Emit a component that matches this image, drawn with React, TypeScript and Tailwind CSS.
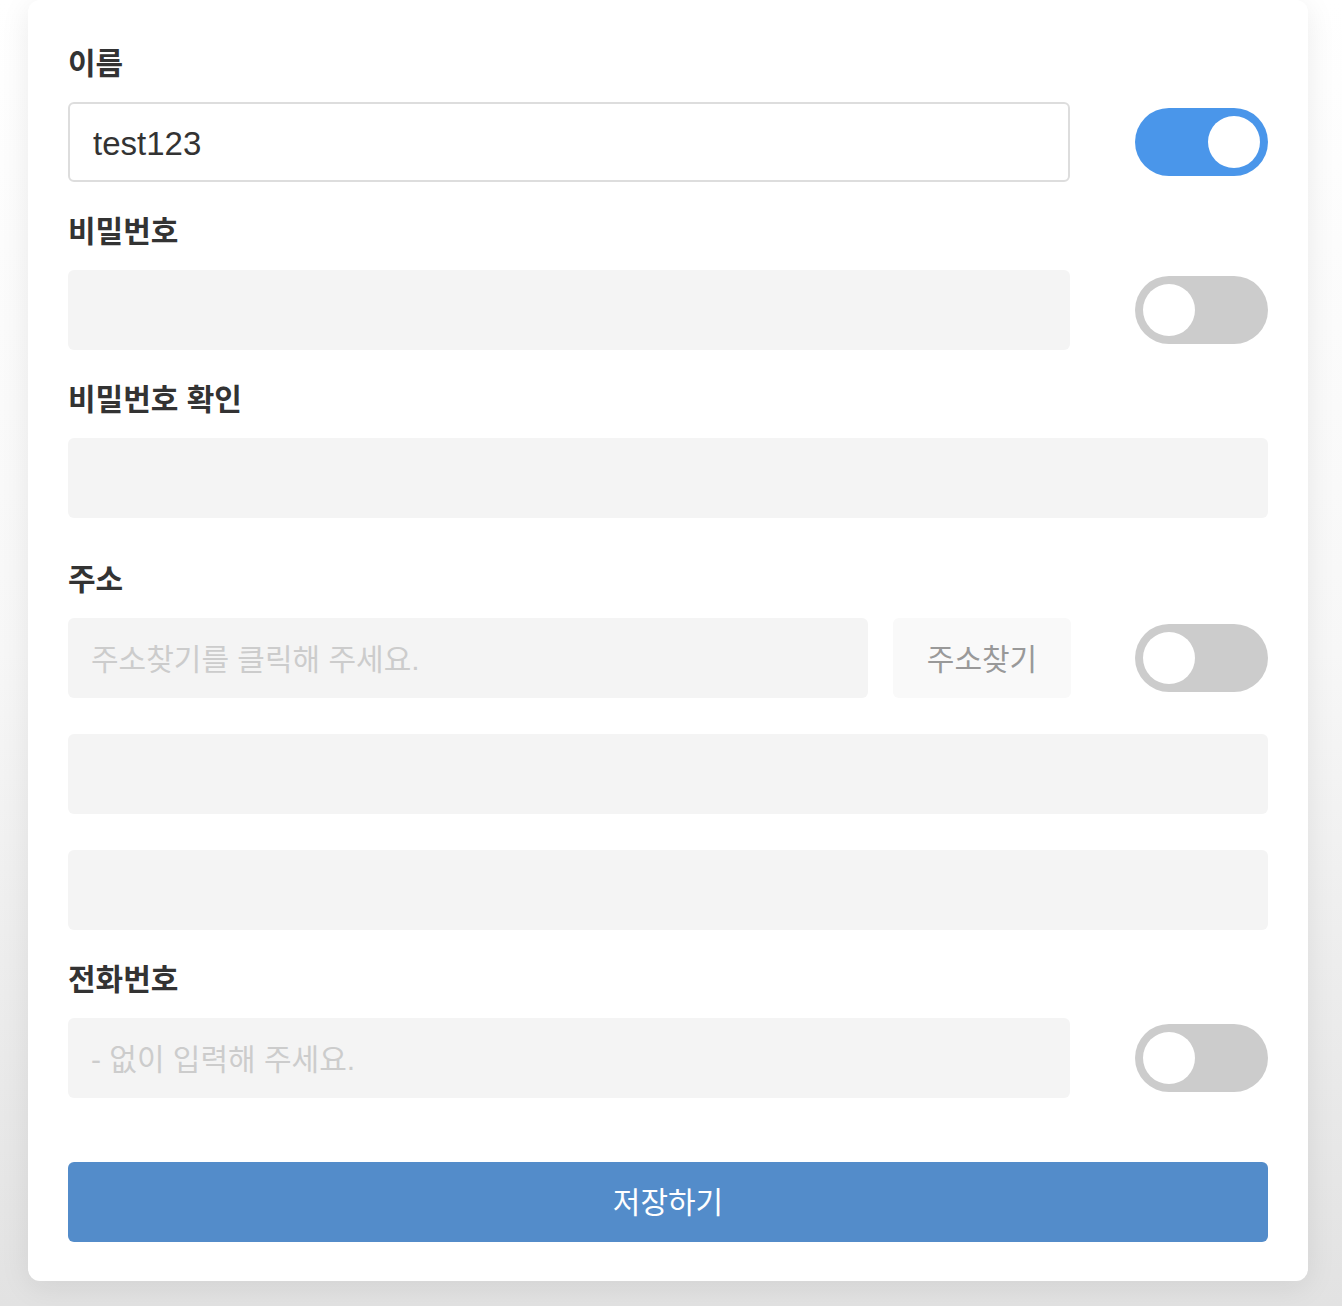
import React, { useState } from 'react';

const font = { fontFamily: '"Liberation Sans", "Noto Sans CJK KR", sans-serif' };

function Toggle({ on, onChange }: { on: boolean; onChange: () => void }) {
  return (
    <button
      type="button"
      onClick={onChange}
      className={`shrink-0 w-[133px] h-[68px] rounded-full p-[8px] flex items-center ${
        on ? 'bg-[#4a96ea] justify-end' : 'bg-[#cccccc] justify-start'
      }`}
    >
      <span className="block w-[52px] h-[52px] rounded-full bg-white" />
    </button>
  );
}

function Label({ children }: { children: React.ReactNode }) {
  return <div className="h-[40px] leading-[44px] text-[30px] font-bold text-[#333]">{children}</div>;
}

function Field({ value, placeholder, bordered }: { value?: string; placeholder?: string; bordered?: boolean }) {
  return (
    <input
      defaultValue={value}
      placeholder={placeholder}
      style={font}
      className={`w-full h-[80px] rounded-[6px] px-[23px] pt-[3px] text-[#333] outline-none placeholder:text-[#cccccc] ${
        bordered ? 'bg-white border-2 border-[#dddddd] text-[33px]' : 'bg-[#f4f4f4] text-[30px]'
      }`}
    />
  );
}

export default function App() {
  const [toggles, setToggles] = useState({ name: true, pw: false, addr: false, phone: false });
  const flip = (k: keyof typeof toggles) => setToggles(t => ({ ...t, [k]: !t[k] }));

  return (
    <div className="min-h-[1306px] w-full bg-gradient-to-b from-white via-[#f7f7f7] to-[#e2e2e2] pl-[28px] pb-[25px]" style={font}>
      <div className="w-[1280px] bg-white rounded-[12px] shadow-[0_6px_30px_rgba(0,0,0,0.08)] px-[40px] pt-[42px] pb-[39px]">
        {/* 이름 */}
        <Label>이름</Label>
        <div className="mt-[20px] flex items-center gap-[65px]">
          <div className="w-[1002px]">
            <Field value="test123" bordered />
          </div>
          <Toggle on={toggles.name} onChange={() => flip('name')} />
        </div>

        {/* 비밀번호 */}
        <div className="mt-[28px]">
          <Label>비밀번호</Label>
        </div>
        <div className="mt-[20px] flex items-center gap-[65px]">
          <div className="w-[1002px]">
            <Field />
          </div>
          <Toggle on={toggles.pw} onChange={() => flip('pw')} />
        </div>

        <div className="mt-[28px]">
          <Label>비밀번호 확인</Label>
        </div>
        <div className="mt-[20px]">
          <Field />
        </div>

        {/* 주소 */}
        <div className="mt-[40px]">
          <Label>주소</Label>
        </div>
        <div className="mt-[20px] flex items-center">
          <div className="w-[800px]">
            <Field placeholder="주소찾기를 클릭해 주세요." />
          </div>
          <button
            type="button"
            className="ml-[25px] w-[178px] h-[80px] pt-[3px] rounded-[6px] bg-[#f9f9f9] text-[30px] text-[#999]"
          >
            주소찾기
          </button>
          <div className="ml-auto">
            <Toggle on={toggles.addr} onChange={() => flip('addr')} />
          </div>
        </div>
        <div className="mt-[36px]">
          <Field />
        </div>
        <div className="mt-[36px]">
          <Field />
        </div>

        {/* 전화번호 */}
        <div className="mt-[28px]">
          <Label>전화번호</Label>
        </div>
        <div className="mt-[20px] flex items-center gap-[65px]">
          <div className="w-[1002px]">
            <Field placeholder="- 없이 입력해 주세요." />
          </div>
          <Toggle on={toggles.phone} onChange={() => flip('phone')} />
        </div>

        <button
          type="button"
          className="mt-[64px] w-full h-[80px] rounded-[6px] bg-[#538cca] text-white text-[30px]"
        >
          저장하기
        </button>
      </div>
    </div>
  );
}
